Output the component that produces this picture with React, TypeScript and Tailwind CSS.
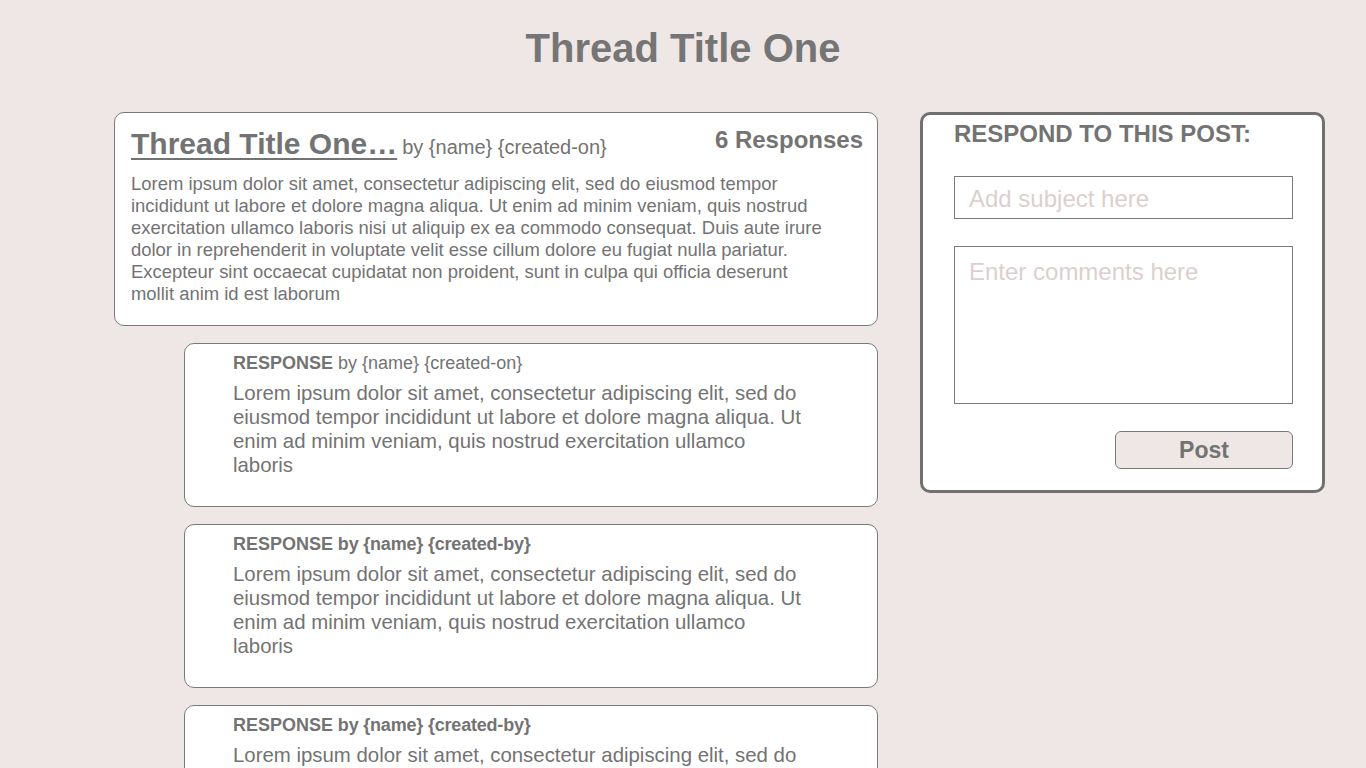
import React from 'react';

const FONT = { fontFamily: '"Liberation Sans", Arial, Helvetica, sans-serif' };

const mainBody = [
  'Lorem ipsum dolor sit amet, consectetur adipiscing elit, sed do eiusmod tempor',
  'incididunt ut labore et dolore magna aliqua. Ut enim ad minim veniam, quis nostrud',
  'exercitation ullamco laboris nisi ut aliquip ex ea commodo consequat. Duis aute irure',
  'dolor in reprehenderit in voluptate velit esse cillum dolore eu fugiat nulla pariatur.',
  'Excepteur sint occaecat cupidatat non proident, sunt in culpa qui officia deserunt',
  'mollit anim id est laborum',
];

const responseBody = [
  'Lorem ipsum dolor sit amet, consectetur adipiscing elit, sed do',
  'eiusmod tempor incididunt ut labore et dolore magna aliqua. Ut',
  'enim ad minim veniam, quis nostrud exercitation ullamco',
  'laboris',
];

interface ResponseItem {
  id: number;
  boldAll: boolean;
  meta: string;
}

const responses: ResponseItem[] = [
  { id: 1, boldAll: false, meta: '{created-on}' },
  { id: 2, boldAll: true, meta: '{created-by}' },
  { id: 3, boldAll: true, meta: '{created-by}' },
];

const ResponseCard: React.FC<{ item: ResponseItem }> = ({ item }) => (
  <div className="h-[164px] shrink-0 rounded-[10px] border border-[#7a7a7a] bg-white pl-[48px] pt-[8px]">
    <p className="text-[18px] leading-[22px] text-[#737373]">
      <span className="font-bold">RESPONSE</span>
      <span className={item.boldAll ? 'font-bold tracking-[-0.2px]' : ''}> by {'{name}'} {item.meta}</span>
    </p>
    <p className="mt-[7px] text-[20.4px] leading-[24px] text-[#737373]">
      {responseBody.map((line, i) => (
        <React.Fragment key={i}>
          {line}
          {i < responseBody.length - 1 && <br />}
        </React.Fragment>
      ))}
    </p>
  </div>
);

export default function App() {
  return (
    <div className="h-screen overflow-hidden bg-[#efe7e6] text-[#737373]" style={FONT}>
      <h1 className="pt-[25px] text-center text-[40px] font-bold leading-[46px] text-[#757575]">Thread Title One</h1>

      <div className="mt-[41px] flex gap-[42px] pl-[114px]">
        {/* Thread + responses */}
        <div className="flex w-[764px] shrink-0 flex-col gap-[17px]">
          <div className="h-[214px] rounded-[10px] border border-[#7a7a7a] bg-white pl-[16px] pr-[14px] pt-[14px]">
            <div className="flex items-start justify-between">
              <div className="flex items-baseline gap-[5px]">
                <span className="text-[30px] font-bold leading-[34px] text-[#737373] underline decoration-[2px] underline-offset-[4px]">
                  Thread Title One…
                </span>
                <span className="text-[20px] leading-[34px]">by {'{name}'} {'{created-on}'}</span>
              </div>
              <span className="-mt-[1px] text-[24px] font-bold leading-[28px]">6 Responses</span>
            </div>
            <p className="mt-[9px] text-[18.45px] leading-[22px]">
              {mainBody.map((line, i) => (
                <React.Fragment key={i}>
                  {line}
                  {i < mainBody.length - 1 && <br />}
                </React.Fragment>
              ))}
            </p>
          </div>

          <div className="ml-[70px] flex flex-col gap-[17px]">
            {responses.map((r) => (
              <ResponseCard key={r.id} item={r} />
            ))}
          </div>
        </div>

        {/* Respond form */}
        <div className="h-[381px] w-[405px] shrink-0 rounded-[10px] border-[3px] border-[#707070] bg-white pl-[31px] pr-[30px] pt-[5px]">
          <h2 className="text-[24px] font-bold leading-[28px] text-[#737373]">RESPOND TO THIS POST:</h2>
          <input
            type="text"
            placeholder="Add subject here"
            className="mt-[28px] block h-[43px] w-[339px] border border-[#7a7a7a] bg-white px-[14px] pt-[2px] text-[24px] text-[#737373] outline-none placeholder:text-[#dccfce]"
          />
          <textarea
            placeholder="Enter comments here"
            className="mt-[27px] block h-[158px] w-[339px] resize-none border border-[#7a7a7a] bg-white px-[14px] pt-[11px] text-[24px] leading-[28px] text-[#737373] outline-none placeholder:text-[#dccfce]"
          />
          <div className="mt-[27px] flex w-[339px] justify-end">
            <button
              type="button"
              className="h-[38px] w-[178px] rounded-[6px] border border-[#7a7a7a] bg-[#efe7e6] text-[23px] font-bold leading-[26px] text-[#737373]"
            >
              Post
            </button>
          </div>
        </div>
      </div>
    </div>
  );
}
